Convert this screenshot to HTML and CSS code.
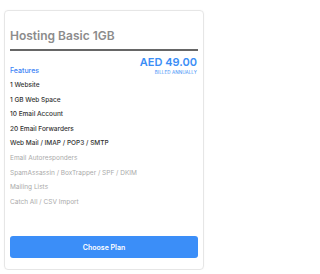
FILE: index.html
```html
<!DOCTYPE html>
<html>
<head>
<meta charset="utf-8">
<link rel="stylesheet" href="styles.css">
</head>
<body>
<div class="card">
  <h2 class="title">Hosting Basic 1GB</h2>
  <div class="rule"></div>
  <div class="head">
    <div class="features-label">Features</div>
    <div class="price">
      <div class="amount">AED 49.00</div>
      <div class="billed">BILLED ANNUALLY</div>
    </div>
  </div>
  <ul class="list">
    <li>1 Website</li>
    <li>1 GB Web Space</li>
    <li>10 Email Account</li>
    <li>20 Email Forwarders</li>
    <li>Web Mail / IMAP / POP3 / SMTP</li>
    <li class="off">Email Autoresponders</li>
    <li class="off">SpamAssassin / BoxTrapper / SPF / DKIM</li>
    <li class="off">Mailing Lists</li>
    <li class="off">Catch All / CSV Import</li>
  </ul>
  <button class="cta">Choose Plan</button>
</div>
</body>
</html>
```
FILE: styles.css
```css
html, body {
  margin: 0;
  padding: 0;
  background: #fff;
  font-family: Inter, "Noto Sans", sans-serif;
}
.card {
  box-sizing: border-box;
  width: 200px;
  height: 260px;
  margin: 10px 0 0 4px;
  border: 1px solid #e6e6e6;
  border-radius: 4px;
  padding: 0 5px;
  display: flex;
  flex-direction: column;
  box-shadow: 0 0 2px rgba(0,0,0,0.04);
}
.title {
  margin: 17px 0 0;
  font-size: 12px;
  line-height: 16px;
  font-weight: 600;
  color: #8c8c8c;
}
.rule {
  height: 2px;
  background: #666;
  margin-top: 5px;
}
.head {
  display: flex;
  justify-content: space-between;
  align-items: flex-start;
  margin-top: 5px;
}
.features-label {
  margin-top: 10px;
  font-size: 7px;
  line-height: 10px;
  font-weight: 500;
  color: #3b82f6;
}
.price {
  text-align: right;
  padding-right: 1px;
}
.amount {
  font-size: 11px;
  line-height: 13px;
  font-weight: 600;
  color: #3b8ef6;
}
.billed {
  font-size: 4.5px;
  line-height: 7px;
  color: #3b8ef6;
  letter-spacing: 0.1px;
}
.list {
  list-style: none;
  margin: 2px 0 0;
  padding: 0;
}
.list li {
  font-size: 6.5px;
  line-height: 14.6px;
  font-weight: 500;
  color: #333;
}
.list li.off {
  font-weight: 400;
  color: #aaa;
}
.cta {
  margin-top: auto;
  margin-bottom: 11px;
  height: 22px;
  border: none;
  border-radius: 3px;
  background: #3b8ef8;
  color: #fff;
  font-family: Inter, "Noto Sans", sans-serif;
  font-size: 7px;
  font-weight: 600;
  padding: 0;
}
```
